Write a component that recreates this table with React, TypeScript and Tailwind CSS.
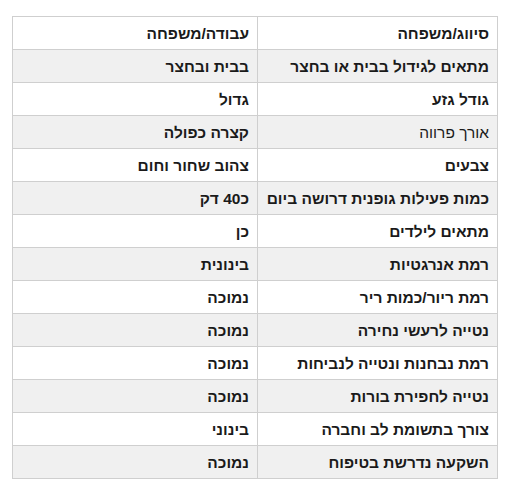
const rows: [string, string, boolean?][] = [
  ["סיווג/משפחה", "עבודה/משפחה"],
  ["מתאים לגידול בבית או בחצר", "בבית ובחצר"],
  ["גודל גזע", "גדול"],
  ["אורך פרווה", "קצרה כפולה", true],
  ["צבעים", "צהוב שחור וחום"],
  ["כמות פעילות גופנית דרושה ביום", "כ40 דק"],
  ["מתאים לילדים", "כן"],
  ["רמת אנרגטיות", "בינונית"],
  ["רמת ריור/כמות ריר", "נמוכה"],
  ["נטייה לרעשי נחירה", "נמוכה"],
  ["רמת נבחנות ונטייה לנביחות", "נמוכה"],
  ["נטייה לחפירת בורות", "נמוכה"],
  ["צורך בתשומת לב וחברה", "בינוני"],
  ["השקעה נדרשת בטיפוח", "נמוכה"],
];

export default function App() {
  return (
    <div className="w-[511px] h-[498px] bg-white pt-[16px] pl-[12px]" style={{ fontFamily: '"Liberation Sans", Arial, sans-serif' }}>
      <table dir="rtl" className="w-[486px] border-collapse border border-[#cfcfcf] text-[15.5px] text-[#1a1a1a]">
        <tbody>
          {rows.map(([k, v, light], i) => (
            <tr key={i} className={i % 2 === 1 ? "bg-[#f0f0f0]" : "bg-white"}>
              <td className={`w-[240px] h-[33px] border border-[#cfcfcf] pr-[8px] pt-[2px] text-right ${light ? "font-normal" : "font-bold"}`}>{k}</td>
              <td className="h-[33px] border border-[#cfcfcf] pr-[8px] pt-[2px] text-right font-bold">{v}</td>
            </tr>
          ))}
        </tbody>
      </table>
    </div>
  );
}
